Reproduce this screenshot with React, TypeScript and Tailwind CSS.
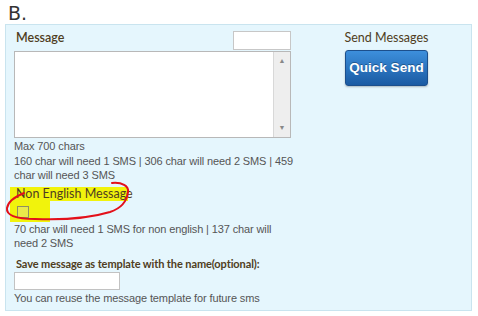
export default function App() {
  const small = "text-[11px] leading-[14.5px] tracking-[-0.12px] text-[#555] [font-family:'Liberation_Sans',Arial,sans-serif]";
  const label = "text-[12.5px] leading-[14px] text-[#4f3d22] [font-family:Lato,sans-serif]";
  return (
    <div className="relative h-[316px] w-[478px] bg-white">
      <div className="pl-[8px] pt-[3px] text-[19px] leading-[20px] text-[#333] [font-family:'DejaVu_Sans',sans-serif]">B.</div>
      <div className="ml-[5px] mt-[1px] flex w-[467px] border border-[#c9e4ef] bg-[#e5f6fd] pb-[5px]">
        <div className="w-[300px] pl-[8px]">
          <div className="flex h-[26px] items-start justify-between pt-[6px] pr-[15px]">
            <span className={label + " pl-[2px] font-semibold"}>Message</span>
            <div className="h-[19px] w-[58px] border border-[#c7c7c7] bg-white" />
          </div>
          <div className="flex h-[87px] w-[277px] border border-[#b8b8b8] bg-white">
            <div className="flex-1" />
            <div className="flex w-[17px] flex-col items-center justify-between border-l border-[#d8d8d8] bg-[#eeeeee] py-[5px]">
              <span className="text-[7px] leading-[8px] text-[#888]">▲</span>
              <span className="text-[7px] leading-[8px] text-[#888]">▼</span>
            </div>
          </div>
          <div className={small + " mt-[1px] w-[283px]"}>
            <p>Max 700 chars</p>
            <p>160 char will need 1 SMS | 306 char will need 2 SMS | 459 char will need 3 SMS</p>
          </div>
          <div className="-ml-[4px] mt-[4px] w-[118px] whitespace-nowrap bg-[#f1f30c] pl-[6px]">
            <span className={label + " block"}>Non English Message</span>
          </div>
          <div className="-ml-[4px] h-[21px] w-[40px] bg-[#f1f30c] pl-[7px] pt-[5px]">
            <div className="h-[12px] w-[12px] border border-[#8f8f62] bg-[#e9ea4a]" />
          </div>
          <p className={small + " w-[283px]"}>70 char will need 1 SMS for non english | 137 char will need 2 SMS</p>
          <p className="mt-[6px] whitespace-nowrap pl-[2px] text-[11px] font-bold leading-[14px] tracking-[-0.1px] text-[#4f3d22] [font-family:Lato,sans-serif]">Save message as template with the name(optional):</p>
          <div className="mt-[1px] h-[18px] w-[106px] border border-[#c2c2c2] bg-white" />
          <p className={small + " mt-[1px]"}>You can reuse the message template for future sms</p>
        </div>
        <div className="flex flex-1 flex-col items-center pt-[6px] pr-[4px]">
          <span className={label}>Send Messages</span>
          <button className="mt-[5px] h-[36px] w-[83px] rounded-[3px] border border-[#1c4f8c] bg-gradient-to-b from-[#3d8fdc] to-[#1a5ba3] text-[13.5px] font-bold text-white shadow-[0_1px_2px_rgba(0,0,0,0.25)] [font-family:'Liberation_Sans',Arial,sans-serif] [text-shadow:0_-1px_0_rgba(0,0,0,0.3)]">
            Quick Send
          </button>
        </div>
      </div>
      <svg className="pointer-events-none absolute left-0 top-0" width="478" height="316">
        <path
          d="M112 183 C122 182 129 186 128 192 C127 201 122 208 110 212 C90 218 60 220 35 219 C15 219 6 215 7 208 C8 202 14 197 24 193"
          fill="none"
          stroke="#e3101a"
          strokeWidth="2"
          strokeLinecap="round"
        />
      </svg>
    </div>
  );
}
